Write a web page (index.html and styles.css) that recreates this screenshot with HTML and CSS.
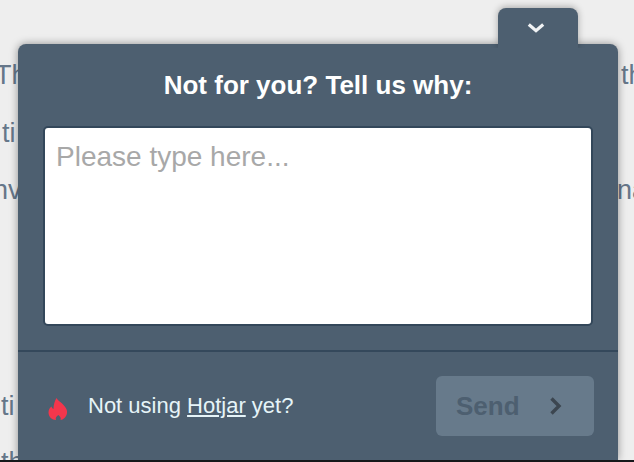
FILE: index.html
```html
<!DOCTYPE html>
<html lang="en">
<head>
<meta charset="utf-8">
<title>Feedback</title>
<link rel="stylesheet" href="styles.css">
</head>
<body>
<div class="page">
  <div class="bg-line bg-l1">Th</div>
  <div class="bg-line bg-l2">ti</div>
  <div class="bg-line bg-l3">nv</div>
  <div class="bg-line bg-l4">ti</div>
  <div class="bg-line bg-l5">th</div>
  <div class="bg-line bg-r1">th</div>
  <div class="bg-line bg-r3">na</div>
  <div class="widget">
    <button class="handle" type="button" aria-label="Collapse">
      <svg class="soft" width="18" height="12" viewBox="0 0 18 12"><path d="M1.800 2.500 9 8.700l7.200-6.200" fill="none" stroke="#f1f3f5" stroke-width="3.200"/></svg>
    </button>
    <div class="panel">
      <h1 class="title">Not for you? Tell us why:</h1>
      <div class="field-wrap">
        <textarea class="field" placeholder="Please type here..."></textarea>
      </div>
      <div class="footer">
        <div class="promo">
          <svg class="flame soft" width="20" height="24" viewBox="0 0 20 24"><path fill="#f4364c" d="M8.500 1C10 4 13 5 15.500 8 18 11 19.500 13 19 16 18.500 20 15 23 12.500 23 13.200 21.500 12.500 19.500 10.300 18 8 19.500 7.300 21.500 8 23 4 23 .5 20 .5 15.500.5 12.500 2 10.500 3.500 9.500 4 11 4.500 11.500 5.500 12 5.500 8 6.500 4 8.500 1z"/></svg>
          <span class="promo-text">Not using <a class="promo-link" href="#">Hotjar</a> yet?</span>
        </div>
        <button class="send" type="button">
          <span>Send</span>
          <svg class="soft" width="16" height="20" viewBox="0 0 16 20"><path d="M3.500 2.500 11 10l-7.500 7.500" fill="none" stroke="#3c4650" stroke-width="3.400"/></svg>
        </button>
      </div>
    </div>
  </div>
  <div class="edge"></div>
</div>
</body>
</html>
```
FILE: styles.css
```css
* { box-sizing: border-box; }
html, body { margin: 0; height: 100%; overflow: hidden; }
body { background: #eeeeee; font-family: "Liberation Sans", Arial, sans-serif; }
.page { position: relative; width: 634px; height: 462px; overflow: hidden; }
.bg-line { position: absolute; font-size: 27px; line-height: 32px; color: #66778a; }
.bg-l1 { left: -5px; top: 59px; }
.bg-l2 { left: 2px; top: 117px; }
.bg-l3 { left: -7px; top: 174px; }
.bg-l4 { left: 1px; top: 390px; }
.bg-l5 { left: 1px; top: 446px; }
.bg-r1 { left: 621px; top: 59px; }
.bg-r3 { left: 617px; top: 174px; }
.widget { position: absolute; left: 18px; top: 8px; width: 600px; display: flex; flex-direction: column; align-items: flex-end; }
.handle { position: relative; z-index: 1; display: flex; align-items: flex-start; justify-content: center; width: 80px; height: 40px; margin: 0 40px -4px 0; padding: 14px 4px 0 0; border: 0; border-radius: 8px 8px 0 0; background: #4d5f70; box-shadow: 0 -1px 7px rgba(0,0,0,.3); clip-path: inset(-10px -10px 0 -10px); }
.soft { filter: blur(.4px); }
.panel { position: relative; width: 600px; height: 416px; background: #4d5f70; border-radius: 8px 8px 0 0; box-shadow: 0 0 8px rgba(0,0,0,.4); }
.title { margin: 0; padding: 26px 0 0; height: 82px; text-align: center; font-size: 26px; line-height: 30px; font-weight: 700; color: #fff; }
.field-wrap { padding: 0 25px; }
.field { display: block; width: 550px; height: 200px; margin: 0; padding: 13px 11px; border: 2px solid #33475a; border-radius: 5px; background: #fff; resize: none; font-family: inherit; font-size: 28px; line-height: 32px; color: #333; outline: 0; }
.field::placeholder { color: #a8a8a8; opacity: 1; }
.footer { display: flex; align-items: center; justify-content: space-between; margin-top: 24px; height: 110px; padding: 24px 24px 24px 30px; border-top: 2px solid #34485b; }
.promo { display: flex; align-items: center; gap: 20px; }
.flame { flex: none; margin-top: 6px; }
.promo-text { font-size: 22px; line-height: 26px; color: #e6f4f8; }
.promo-link { color: inherit; text-decoration: underline; }
.send { display: flex; align-items: center; justify-content: space-between; width: 158px; height: 60px; padding: 0 30px 0 20px; border: 0; border-radius: 6px; background: #677a8b; font-family: inherit; font-size: 26px; font-weight: 700; color: #4d5f70; }
.edge { position: absolute; left: 0; right: 0; top: 460px; height: 2px; background: #15181a; }
```
